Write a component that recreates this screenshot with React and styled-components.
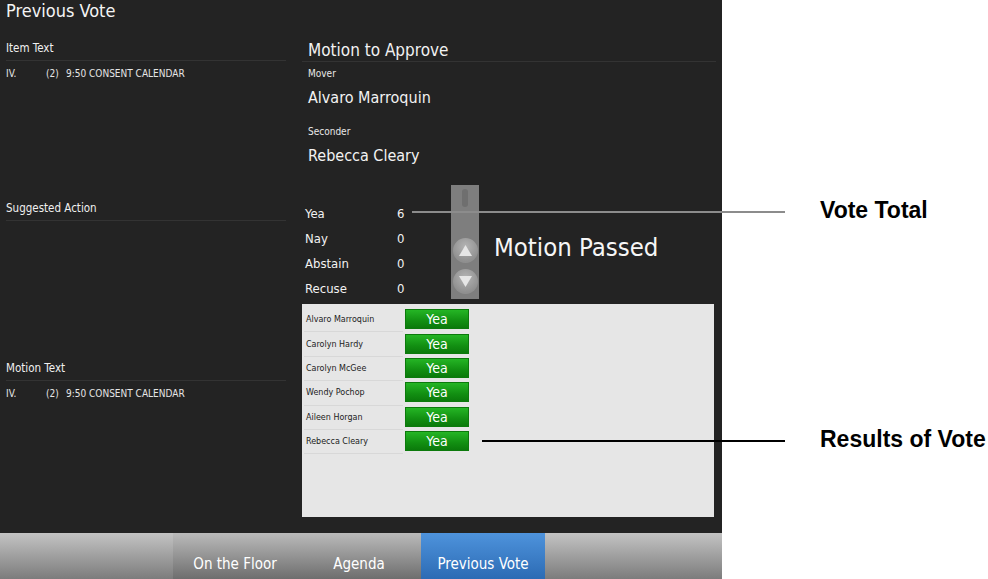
import React from "react";
import styled, { createGlobalStyle } from "styled-components";

const Global = createGlobalStyle`
  html, body { margin: 0; padding: 0; background: #fff; }
  body { font-family: "DejaVu Sans Condensed", "Liberation Sans Narrow", "Liberation Sans", sans-serif; }
`;

const members = [
  "Alvaro Marroquin",
  "Carolyn Hardy",
  "Carolyn McGee",
  "Wendy Pochop",
  "Aileen Horgan",
  "Rebecca Cleary",
];

const counts = [
  ["Yea", 6],
  ["Nay", 0],
  ["Abstain", 0],
  ["Recuse", 0],
];

export default function App() {
  return (
    <Page>
      <Global />
      <Screen>
        <Main>
          <Title>Previous Vote</Title>
          <Columns>
            <div>
              <Section h={160}>
                <SectionHead>Item Text</SectionHead>
                <ItemRow>
                  <span className="num">IV.</span>
                  <span className="sub">(2)</span>
                  <span>9:50 CONSENT CALENDAR</span>
                </ItemRow>
              </Section>
              <Section h={160}>
                <SectionHead>Suggested Action</SectionHead>
              </Section>
              <Section h={130}>
                <SectionHead>Motion Text</SectionHead>
                <ItemRow>
                  <span className="num">IV.</span>
                  <span className="sub">(2)</span>
                  <span>9:50 CONSENT CALENDAR</span>
                </ItemRow>
              </Section>
            </div>
            <div>
              <MotionHead>Motion to Approve</MotionHead>
              <SmallLabel>Mover</SmallLabel>
              <Person>Alvaro Marroquin</Person>
              <SmallLabel $gap={16}>Seconder</SmallLabel>
              <Person>Rebecca Cleary</Person>
              <VoteBlock>
                <Counts>
                  {counts.map(([label, n]) => (
                    <CountRow key={label}>
                      <span>{label}</span>
                      <span>{n}</span>
                    </CountRow>
                  ))}
                </Counts>
                <Scroller>
                  <Thumb />
                  <RoundBtn>
                    <svg width="13" height="11" viewBox="0 0 12 10">
                      <path d="M6 0 L12 10 L0 10 Z" fill="#e6e6e6" />
                    </svg>
                  </RoundBtn>
                  <RoundBtn>
                    <svg width="13" height="11" viewBox="0 0 12 10">
                      <path d="M0 0 L12 0 L6 10 Z" fill="#e6e6e6" />
                    </svg>
                  </RoundBtn>
                </Scroller>
                <Result>Motion Passed</Result>
              </VoteBlock>
              <Results>
                {members.map((m) => (
                  <MemberRow key={m}>
                    <MemberName>{m}</MemberName>
                    <VoteBtn>Yea</VoteBtn>
                  </MemberRow>
                ))}
              </Results>
            </div>
          </Columns>
        </Main>
        <TabBar>
          <Tabs>
            <Tab>On the Floor</Tab>
            <Tab>Agenda</Tab>
            <Tab $active>Previous Vote</Tab>
          </Tabs>
        </TabBar>
      </Screen>
      <Callout $top={211} $left={412} $width={373} $color="#8c8c8c" />
      <Note $top={196}>Vote Total</Note>
      <Callout $top={440} $left={482} $width={303} $color="#000" />
      <Note $top={425}>Results of Vote</Note>
    </Page>
  );
}

const Page = styled.div`
  position: relative;
  width: 988px;
  height: 579px;
  overflow: hidden;
  background: #fff;
`;

const Screen = styled.div`
  width: 722px;
  height: 579px;
  display: flex;
  flex-direction: column;
`;

const Main = styled.div`
  height: 533px;
  box-sizing: border-box;
  padding: 0 6px;
  background-color: #232323;
  color: #f2f2f2;
`;

const Title = styled.div`
  height: 40px;
  font-size: 18px;
  line-height: 22px;
  color: #f4f4f4;
`;

const Columns = styled.div`
  display: grid;
  grid-template-columns: 280px 414px;
  column-gap: 16px;
`;

const Section = styled.div`
  height: ${(p) => p.h}px;
`;

const SectionHead = styled.div`
  font-size: 11.5px;
  line-height: 16px;
  padding-bottom: 4px;
  border-bottom: 1px solid #333;
  color: #f0f0f0;
`;

const ItemRow = styled.div`
  display: flex;
  margin-top: 6px;
  font-size: 10px;
  line-height: 14px;
  color: #e6e6e6;
  .num { width: 40px; }
  .sub { width: 20px; }
`;

const MotionHead = styled.div`
  font-size: 17px;
  line-height: 22px;
  margin-top: -1px;
  padding: 0 6px;
  border-bottom: 1px solid #333;
`;

const SmallLabel = styled.div`
  font-size: 10px;
  line-height: 14px;
  margin-top: ${(p) => p.$gap || 5}px;
  padding-left: 6px;
  color: #e8e8e8;
`;

const Person = styled.div`
  font-size: 16px;
  line-height: 22px;
  margin-top: 6px;
  padding-left: 6px;
`;

const VoteBlock = styled.div`
  display: flex;
  align-items: flex-start;
  margin-top: 18px;
  height: 114px;
`;

const Counts = styled.div`
  width: 149px;
  padding-top: 16px;
`;

const CountRow = styled.div`
  display: flex;
  height: 25px;
  align-items: center;
  padding-left: 3px;
  font-size: 13px;
  span:first-child { width: 92px; }
`;

const Scroller = styled.div`
  width: 28px;
  height: 114px;
  background: #7e7e7e;
  display: flex;
  flex-direction: column;
  align-items: center;
`;

const Thumb = styled.div`
  width: 6px;
  height: 18px;
  margin-top: 4px;
  margin-bottom: 25px;
  border-radius: 3px;
  background: #6f6f6f;
`;

const RoundBtn = styled.div`
  width: 25px;
  height: 25px;
  margin-top: 6px;
  border-radius: 50%;
  background: radial-gradient(circle at 50% 35%, #b4b4b4, #8f8f8f 72%);
  display: flex;
  align-items: center;
  justify-content: center;
`;

const Result = styled.div`
  margin-left: 15px;
  margin-top: 46px;
  font-size: 25.5px;
  line-height: 32px;
  color: #f6f6f6;
`;

const Results = styled.div`
  margin-top: 5px;
  width: 412px;
  height: 213px;
  box-sizing: border-box;
  padding: 4px 0 0 2px;
  background: #e6e6e6;
`;

const MemberRow = styled.div`
  display: flex;
  align-items: center;
  height: 24.4px;
`;

const MemberName = styled.div`
  width: 99px;
  height: 100%;
  box-sizing: border-box;
  padding-left: 2px;
  display: flex;
  align-items: center;
  border-bottom: 1px solid #d8d8d8;
  font-family: "DejaVu Sans", sans-serif;
  font-size: 8px;
  color: #222;
`;

const VoteBtn = styled.div`
  width: 64px;
  height: 20px;
  box-sizing: border-box;
  margin-left: 2px;
  margin-top: -2px;
  border: 1px solid #0c7a0c;
  background: linear-gradient(#25b525, #128f12 60%, #0b7a0b);
  color: #fff;
  font-size: 14px;
  line-height: 18px;
  text-align: center;
`;

const TabBar = styled.div`
  flex: 1;
  background: linear-gradient(#c3c3c3, #7c7c7c);
  display: flex;
`;

const Tabs = styled.div`
  display: flex;
  margin-left: 173px;
  background: linear-gradient(#bababa, #6e6e6e);
`;

const Tab = styled.div`
  width: 124px;
  height: 46px;
  box-sizing: border-box;
  padding-top: 21px;
  text-align: center;
  font-size: 15px;
  line-height: 20px;
  color: #fff;
  background: ${(p) => (p.$active ? "linear-gradient(#4e93dc, #2c6bb4)" : "transparent")};
`;

const Callout = styled.div`
  position: absolute;
  top: ${(p) => p.$top}px;
  left: ${(p) => p.$left}px;
  width: ${(p) => p.$width}px;
  height: 2px;
  background: ${(p) => p.$color};
`;

const Note = styled.div`
  position: absolute;
  top: ${(p) => p.$top}px;
  left: 820px;
  font-family: "Liberation Sans", Arial, sans-serif;
  font-weight: bold;
  font-size: 23px;
  line-height: 28px;
  color: #000;
`;
